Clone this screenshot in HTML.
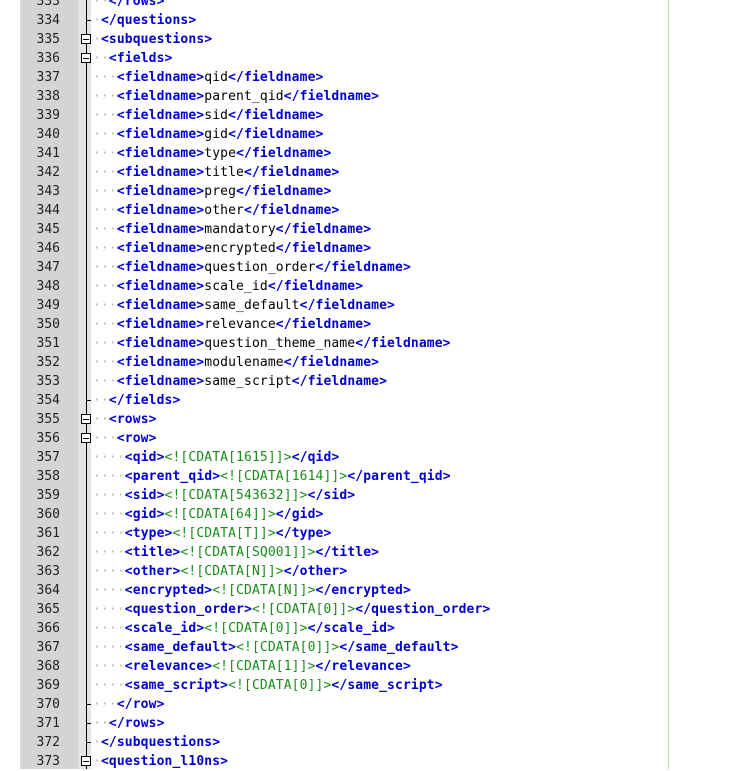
<!DOCTYPE html>
<html><head><meta charset="utf-8"><style>
body{margin:0;width:740px;height:769px;background:#fff;overflow:hidden;position:relative;font-family:"DejaVu Sans Mono","Liberation Mono",monospace;font-size:13px}
#g{position:absolute;left:20px;top:0;width:58px;height:769px;background:#d4d4d4}
#g2{position:absolute;left:20px;top:0;width:2px;height:769px;background:#dcdcdc}
#f{position:absolute;left:78px;top:0;width:13px;height:769px;background:#e4e4e4}
#vl{position:absolute;left:86px;top:0;width:1px;height:769px;background:#000}
#gl{position:absolute;left:668px;top:0;width:1px;height:769px;background:#b5e6ad}
.n{position:absolute;left:20px;width:40px;text-align:right;color:#222;height:19px;line-height:19px}
.l{position:absolute;left:93px;white-space:pre;height:19px;line-height:19px;color:#000;letter-spacing:0.12px}
.t{color:#0000d0;font-weight:bold}
.c{color:#1a8c1a}
.d{color:#bbb}
.b{position:absolute;left:81px;border:1px solid #000;background:#fff;box-sizing:content-box;width:8px;height:8px}
.b:after{content:"";position:absolute;left:1px;top:4px;width:6px;height:1px;background:#000}
.k{position:absolute;left:86px;width:5px;height:1px;background:#000}
</style></head><body>
<div id="g"></div><div id="g2"></div><div id="f"></div><div id="vl"></div><div id="gl"></div>
<div id="c"></div>
<script>
(function(){
var L={333:[2,'<span class=t>&lt;/rows&gt;</span>'],334:[1,'<span class=t>&lt;/questions&gt;</span>'],335:[1,'<span class=t>&lt;subquestions&gt;</span>'],336:[2,'<span class=t>&lt;fields&gt;</span>']};
var fn=['qid','parent_qid','sid','gid','type','title','preg','other','mandatory','encrypted','question_order','scale_id','same_default','relevance','question_theme_name','modulename','same_script'];
fn.forEach(function(s,i){L[337+i]=[3,'<span class=t>&lt;fieldname&gt;</span>'+s+'<span class=t>&lt;/fieldname&gt;</span>']});
L[354]=[2,'<span class=t>&lt;/fields&gt;</span>'];L[355]=[2,'<span class=t>&lt;rows&gt;</span>'];L[356]=[3,'<span class=t>&lt;row&gt;</span>'];
var rw=[['qid','1615'],['parent_qid','1614'],['sid','543632'],['gid','64'],['type','T'],['title','SQ001'],['other','N'],['encrypted','N'],['question_order','0'],['scale_id','0'],['same_default','0'],['relevance','1'],['same_script','0']];
rw.forEach(function(r,i){L[357+i]=[4,'<span class=t>&lt;'+r[0]+'&gt;</span><span class=c>&lt;![CDATA['+r[1]+']]&gt;</span><span class=t>&lt;/'+r[0]+'&gt;</span>']});
L[370]=[3,'<span class=t>&lt;/row&gt;</span>'];L[371]=[2,'<span class=t>&lt;/rows&gt;</span>'];L[372]=[1,'<span class=t>&lt;/subquestions&gt;</span>'];L[373]=[1,'<span class=t>&lt;question_l10ns&gt;</span>'];
var h='',boxes=[335,336,355,356,373],ticks=[334,354,370,371,372];
for(var n=333;n<=373;n++){var y=(n-333)*19-8;
h+='<div class=n style="top:'+y+'px">'+n+'</div>';
h+='<div class=l style="top:'+y+'px"><span class=d>'+'·'.repeat(L[n][0])+'</span>'+L[n][1]+'</div>';
if(boxes.indexOf(n)>=0)h+='<div class=b style="top:'+(y+4)+'px"></div>';
if(ticks.indexOf(n)>=0)h+='<div class=k style="top:'+(y+9)+'px"></div>';}
document.getElementById('c').innerHTML=h;
})();
</script>
</body></html>
